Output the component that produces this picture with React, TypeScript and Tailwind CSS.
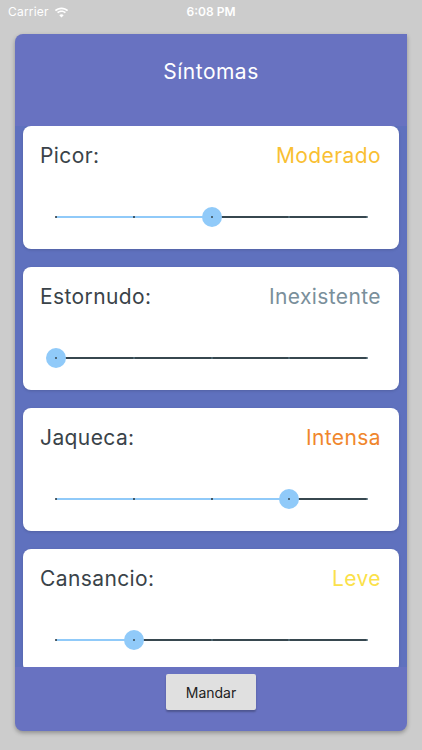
import React from "react";

const items = [
  { label: "Picor:", value: "Moderado", color: "#f9bf33", v: 2 },
  { label: "Estornudo:", value: "Inexistente", color: "#7a8f9b", v: 0 },
  { label: "Jaqueca:", value: "Intensa", color: "#f0862c", v: 3 },
  { label: "Cansancio:", value: "Leve", color: "#fbe14a", v: 1 },
];

function Slider({ v }: { v: number }) {
  const w = 311;
  const pos = (v / 4) * w;
  return (
    <div className="relative h-[20px] w-[311px]">
      <div className="absolute left-0 right-0 top-[9px] h-[2px] bg-[#37474f]" />
      <div className="absolute left-0 top-[9px] h-[2px] bg-[#90caf9]" style={{ width: pos }} />
      {[0, 1, 2, 3, 4].map((i) => (
        <div
          key={i}
          className={`absolute top-[9px] h-[2px] w-[2px] rounded-full ${i <= v ? "bg-[#263238]" : "bg-[#546e7a]"}`}
          style={{ left: (i / 4) * w - 1 }}
        />
      ))}
      <div
        className="absolute top-0 h-[20px] w-[20px] rounded-full bg-[#90caf9]"
        style={{ left: pos - 10 }}
      >
        <div className="absolute left-[9px] top-[9px] h-[2px] w-[2px] rounded-full bg-[#37474f]" />
      </div>
    </div>
  );
}

export default function App() {
  return (
    <div
      className="relative h-[750px] w-[422px] overflow-hidden bg-[#cccccc]"
      style={{ fontFamily: "Inter, Roboto, 'Noto Sans', sans-serif" }}
    >
      <div className="relative flex h-[24px] items-center px-[8px] text-[12px] text-white">
        <span className="tracking-[0.2px]">Carrier</span>
        <svg className="ml-[5px]" width="15" height="11" viewBox="0 0 15 11">
          <path d="M7.5 2.2c2.1 0 4 .8 5.5 2.1l1.2-1.2C12.4 1.4 10 .5 7.5.5S2.6 1.4.8 3.1L2 4.3c1.5-1.3 3.4-2.1 5.5-2.1z" fill="white" />
          <path d="M7.5 5.1c1.3 0 2.4.5 3.3 1.2l1.2-1.2C10.8 4 9.2 3.4 7.5 3.4S4.2 4 3 5.1l1.2 1.2c.9-.7 2-1.2 3.3-1.2z" fill="white" />
          <path d="M7.5 10.5 9.7 8.2C9.1 7.7 8.3 7.3 7.5 7.3s-1.6.4-2.2.9z" fill="white" />
        </svg>
        <span className="absolute left-0 right-0 text-center font-semibold">6:08 PM</span>
      </div>

      <div className="ml-[15px] mt-[10px] flex h-[697px] w-[392px] flex-col overflow-hidden rounded-[8px] rounded-tr-none bg-[#6872c1] shadow-[0_2px_4px_rgba(0,0,0,0.3)]">
        <div className="h-[92px] shrink-0 pt-[24px] text-center text-[21px] leading-[28px] tracking-[0.5px] text-white">
          Síntomas
        </div>
        <div className="flex h-[541px] shrink-0 flex-col gap-[18px] overflow-hidden bg-[#5f71be] px-[8px]">
          {items.map((it) => (
            <div
              key={it.label}
              className="flex h-[123px] shrink-0 flex-col rounded-[8px] bg-white shadow-[0_1px_3px_rgba(0,0,0,0.15)]"
            >
              <div className="flex h-[60px] items-center justify-between pl-[17px] pr-[18px] text-[21px] tracking-[0.4px]">
                <span className="text-[#3a4349]">{it.label}</span>
                <span style={{ color: it.color }}>{it.value}</span>
              </div>
              <div className="mt-[21px] pl-[33px]">
                <Slider v={it.v} />
              </div>
            </div>
          ))}
        </div>
        <div className="flex justify-center pt-[7px]">
          <button className="h-[36px] w-[90px] rounded-[2px] bg-[#e0e0e0] text-[14px] text-[#222] shadow-[0_2px_2px_rgba(0,0,0,0.25)]">
            Mandar
          </button>
        </div>
      </div>
    </div>
  );
}
